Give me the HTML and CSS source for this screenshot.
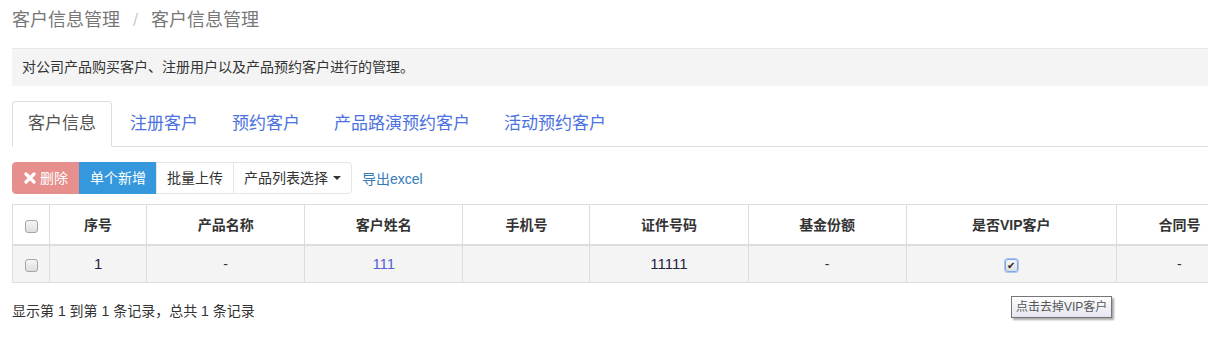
FILE: index.html
```html
<!DOCTYPE html>
<html lang="zh-CN">
<head>
    <meta charset="UTF-8">
    <title>客户信息管理</title>
    <link rel="stylesheet" href="styles.css">
</head>
<body>
    <div class="page">
        <div class="breadcrumb">
            <span>客户信息管理</span>
            <span class="sep">/</span>
            <span>客户信息管理</span>
        </div>

        <div class="note">对公司产品购买客户、注册用户以及产品预约客户进行的管理。</div>

        <ul class="tabs">
            <li class="active"><a>客户信息</a></li>
            <li><a>注册客户</a></li>
            <li><a>预约客户</a></li>
            <li><a>产品路演预约客户</a></li>
            <li><a>活动预约客户</a></li>
        </ul>

        <div class="toolbar">
            <div class="btn-group">
                <button class="btn btn-danger">
                    <svg width="12" height="12" viewBox="0 0 12 12"><path d="M2 2 L10 10 M10 2 L2 10" stroke="#fff" stroke-width="3.2" stroke-linecap="round"/></svg>
                    删除
                </button>
                <button class="btn btn-primary">单个新增</button>
                <button class="btn">批量上传</button>
                <button class="btn">产品列表选择 <span class="caret"></span></button>
            </div>
            <a class="export">导出excel</a>
        </div>

        <table class="grid">
            <colgroup>
                <col style="width:37px">
                <col style="width:97px">
                <col style="width:158px">
                <col style="width:158px">
                <col style="width:127px">
                <col style="width:158px">
                <col style="width:158px">
                <col style="width:210px">
                <col style="width:126px">
            </colgroup>
            <thead>
                <tr>
                    <th><span class="check"></span></th>
                    <th>序号</th>
                    <th>产品名称</th>
                    <th>客户姓名</th>
                    <th>手机号</th>
                    <th>证件号码</th>
                    <th>基金份额</th>
                    <th>是否VIP客户</th>
                    <th>合同号</th>
                </tr>
            </thead>
            <tbody>
                <tr>
                    <td><span class="check"></span></td>
                    <td class="num">1</td>
                    <td>-</td>
                    <td class="num"><a class="name">111</a></td>
                    <td></td>
                    <td class="num">11111</td>
                    <td>-</td>
                    <td><span class="check checked">&#10004;</span></td>
                    <td>-</td>
                </tr>
            </tbody>
        </table>

        <div class="summary">显示第 1 到第 1 条记录，总共 1 条记录</div>

        <div class="tooltip">点击去掉VIP客户</div>
    </div>
</body>
</html>
```

FILE: styles.css
```css
* {
    box-sizing: border-box;
}
html, body {
    overflow: hidden;
}
body {
    margin: 0;
    padding: 0 0 0 12px;
    font-family: 'Liberation Sans', 'Noto Sans CJK SC', sans-serif;
    font-size: 14px;
    color: #333;
    background: white;
}
.page {
    width: 1240px;
    position: relative;
}
.breadcrumb {
    margin-top: 8px;
    font-size: 18px;
    line-height: 24px;
    color: #777;
}
.breadcrumb .sep {
    color: #ccc;
    padding: 0 8px;
}
.note {
    margin-top: 16px;
    background-color: #f4f4f4;
    border-top: 1px solid #e8e8e8;
    padding: 8px 10px;
    line-height: 21px;
    font-size: 14px;
    color: #333;
}
.tabs {
    list-style: none;
    margin: 15px 0 0 0;
    padding: 0;
    display: flex;
    border-bottom: 1px solid #ddd;
}
.tabs li {
    margin-right: 2px;
    margin-bottom: -1px;
}
.tabs a {
    display: block;
    padding: 10px 15px;
    font-size: 17px;
    line-height: 24px;
    color: #4b72e0;
    border: 1px solid transparent;
    border-radius: 4px 4px 0 0;
}
.tabs .active a {
    color: #555;
    background: white;
    border-color: #ddd #ddd transparent #ddd;
}
.toolbar {
    margin-top: 15px;
    display: flex;
    align-items: center;
}
.btn-group {
    display: flex;
}
.btn {
    font-family: inherit;
    font-size: 14px;
    line-height: 18px;
    padding: 6px 10px;
    border: 1px solid #e6e6e6;
    background: white;
    color: #333;
    display: flex;
    align-items: center;
    gap: 4px;
}
.btn + .btn {
    margin-left: -1px;
}
.btn-group .btn:first-child {
    border-radius: 4px 0 0 4px;
}
.btn-group .btn:last-child {
    border-radius: 0 4px 4px 0;
}
.btn-danger {
    background-color: #e68f8c;
    border-color: #e68f8c;
    color: white;
    padding: 6px 11px;
}
.btn-primary {
    background-color: #3598dc;
    border-color: #3598dc;
    color: white;
}
.caret {
    display: inline-block;
    width: 0;
    height: 0;
    border-top: 4px solid #333;
    border-left: 4px solid transparent;
    border-right: 4px solid transparent;
    margin-left: 1px;
}
.export {
    margin-left: 10px;
    color: #337ab7;
    font-size: 14px;
}
.grid {
    margin-top: 10px;
    border-collapse: collapse;
    table-layout: fixed;
    width: 1231px;
    border: 1px solid #ddd;
}
.grid th, .grid td {
    border: 1px solid #ddd;
    text-align: center;
    line-height: 20px;
    vertical-align: middle;
}
.grid th {
    padding: 10px 8px 9px;
    font-weight: bold;
    border-bottom: 2px solid #ddd;
}
.grid td {
    padding: 8px;
    background-color: #f4f4f4;
}
.grid .num {
    font-size: 15px;
    color: #222244;
}
.grid .name {
    color: #5a5fd4;
}
.check {
    display: inline-block;
    width: 13px;
    height: 13px;
    border: 1px solid #a6a6a6;
    border-radius: 3px;
    background: linear-gradient(#f6f6f6, #dedede);
    vertical-align: middle;
    font-size: 10px;
    line-height: 11px;
    color: #222;
    text-align: center;
}
.check.checked {
    border-color: #7aa7e8;
    box-shadow: 0 0 0 1px #a9c7f2;
}
.summary {
    margin-top: 18px;
    font-size: 14px;
    line-height: 20px;
    color: #333;
}
.tooltip {
    position: absolute;
    left: 999px;
    top: 288px;
    padding: 2px 4px;
    font-size: 12px;
    line-height: 16px;
    color: #575757;
    border: 1px solid #767676;
    background: linear-gradient(#ffffff, #e4e5f0);
    box-shadow: 2px 2px 2px rgba(0, 0, 0, 0.35);
}
```
